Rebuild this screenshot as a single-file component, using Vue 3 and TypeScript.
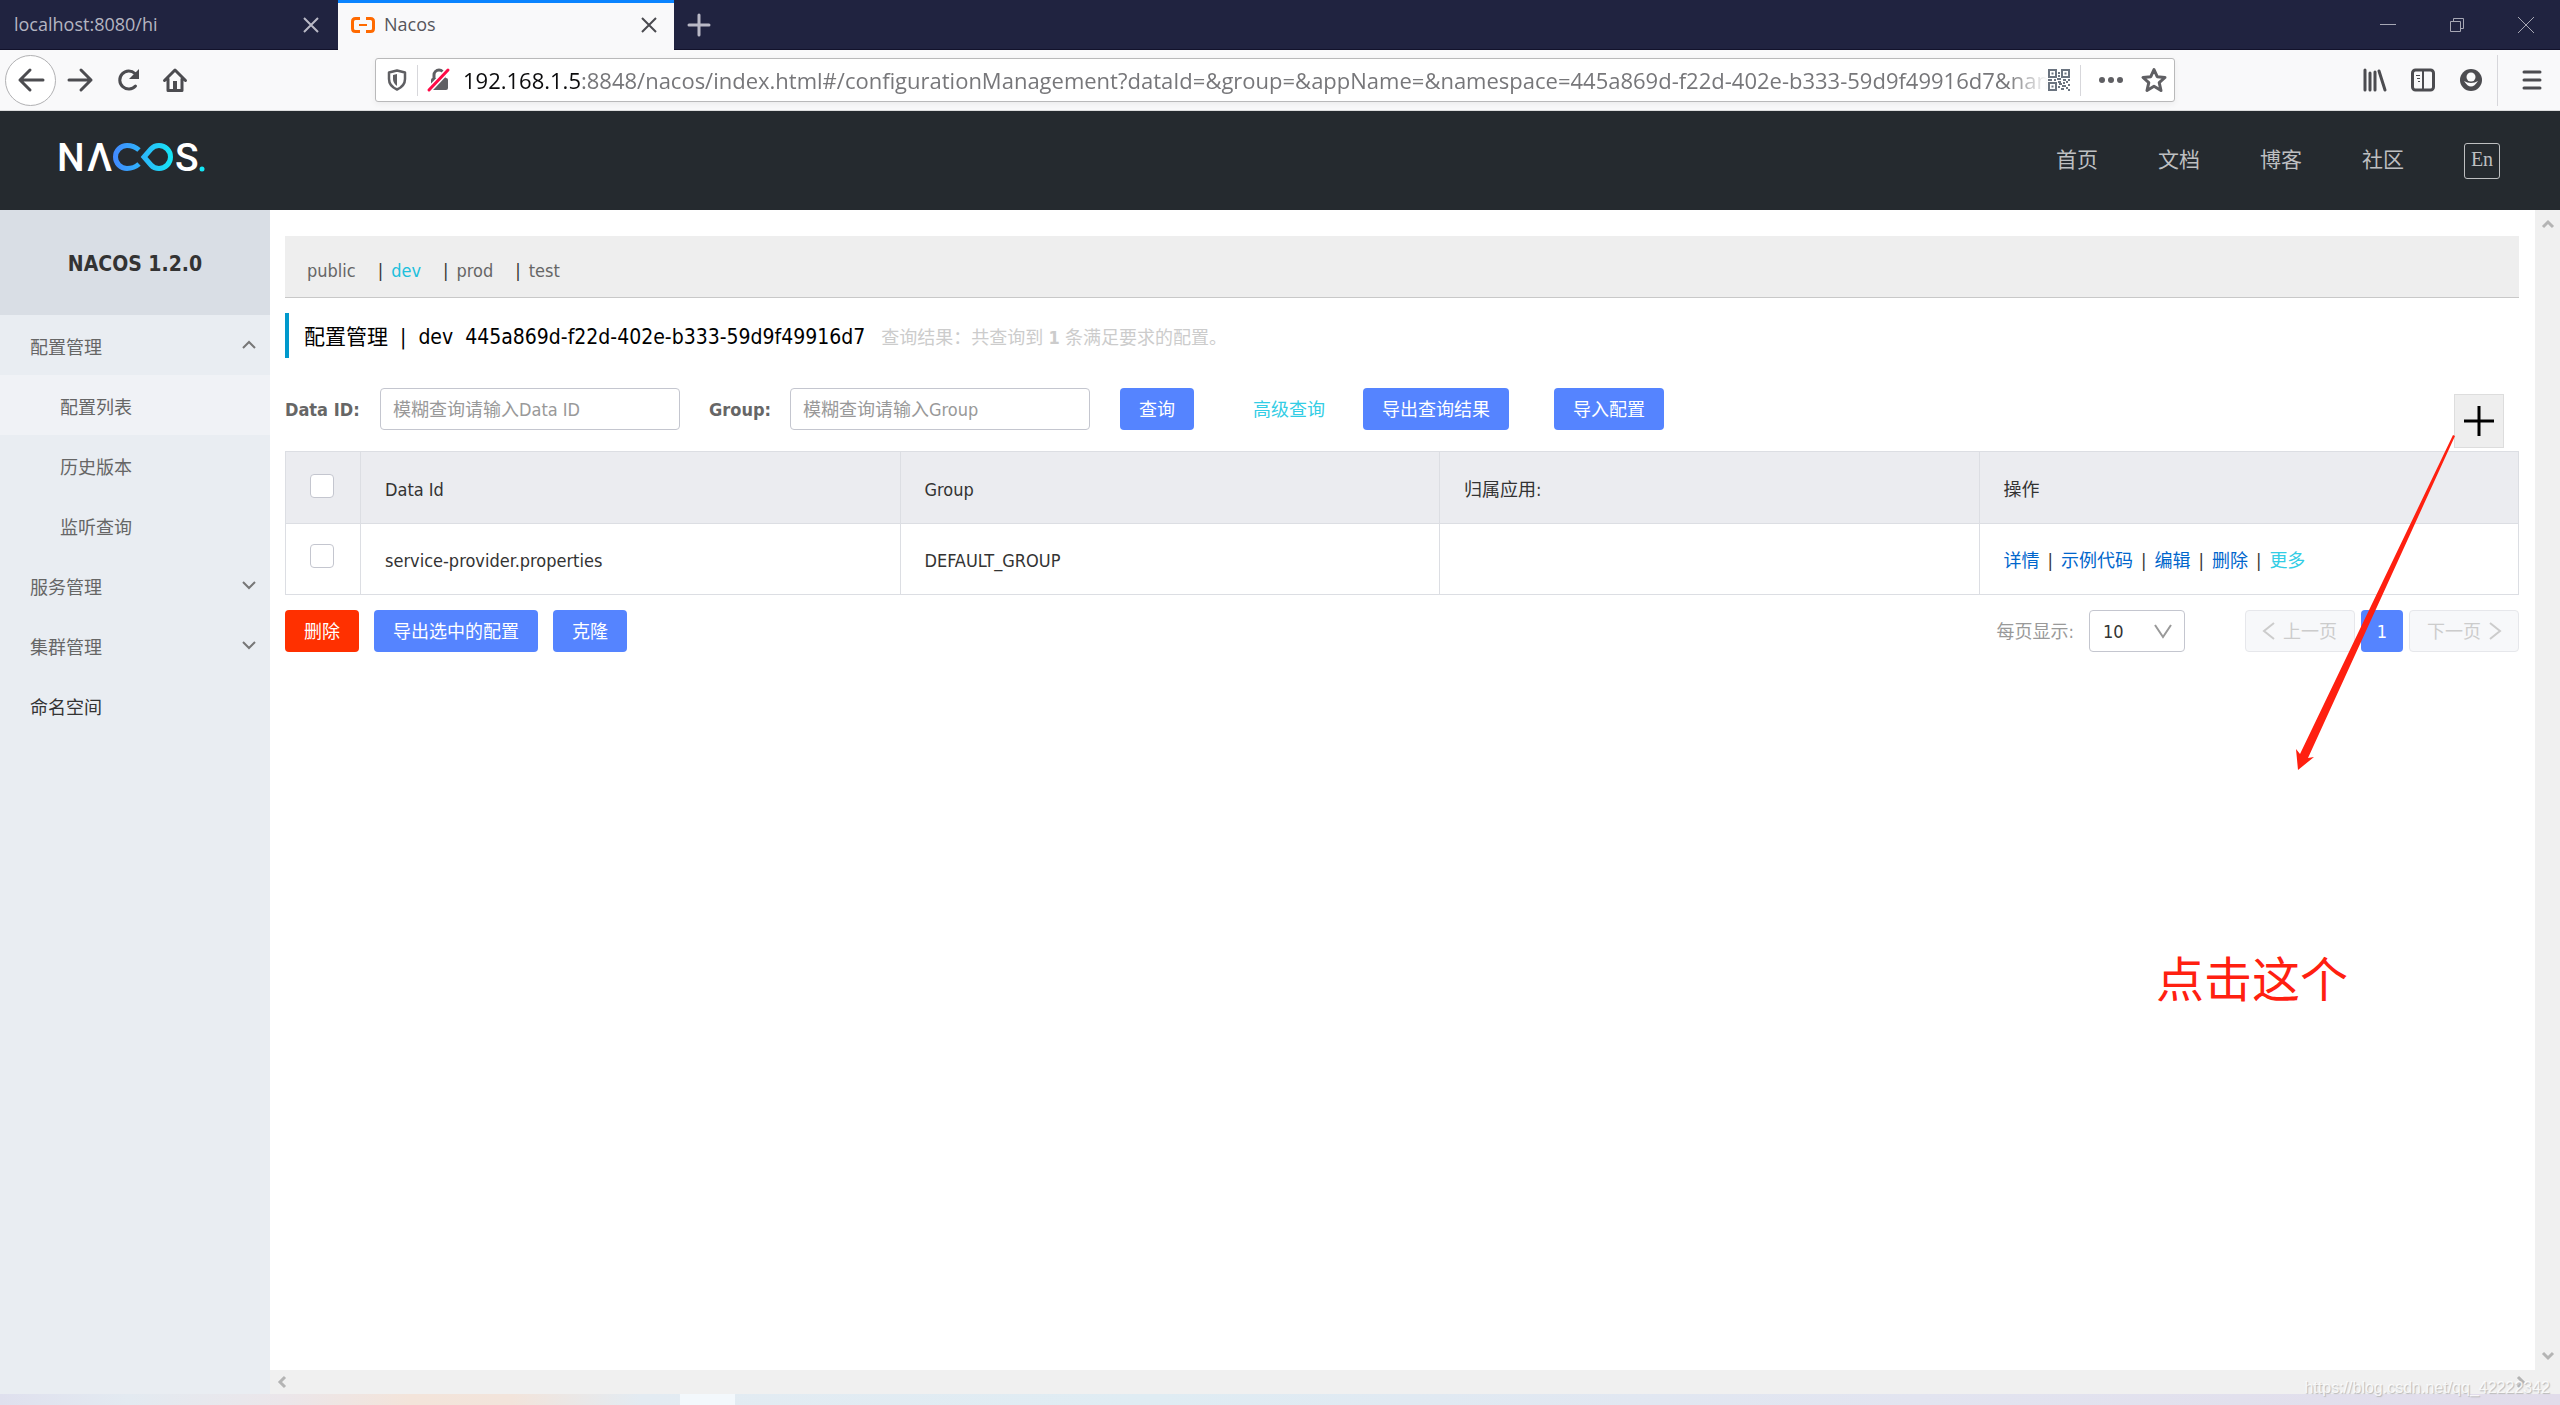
<script setup lang="ts">
import { ref } from 'vue'

interface NavLink { label: string }
interface ConfigRow { dataId: string; group: string; app: string }

const url = ':8848/nacos/index.html#/configurationManagement?dataId=&group=&appName=&namespace=445a869d-f22d-402e-b333-59d9f49916d7&name'
const navLinks: NavLink[] = [{ label: '首页' }, { label: '文档' }, { label: '博客' }, { label: '社区' }]
const namespaces: string[] = ['public', 'dev', 'prod', 'test']
const current = ref('dev')
const namespaceId = '445a869d-f22d-402e-b333-59d9f49916d7'
const dataId = ref('')
const group = ref('')
const pageSize = ref('10')
const rows: ConfigRow[] = [{ dataId: 'service-provider.properties', group: 'DEFAULT_GROUP', app: '' }]
const operations: string[] = ['详情', '示例代码', '编辑', '删除']
</script>

<template>
  <div class="window">
    <div class="tabs">
      <div class="tab">
        <span class="tab-title">localhost:8080/hi</span>
        <button class="icon-btn" aria-label="Close tab">
          <svg width="16" height="16" viewBox="0 0 16 16"><path d="M1 1L15 15M15 1L1 15" stroke="#b9b9c6" stroke-width="2" fill="none" /></svg>
        </button>
      </div>
      <div class="tab active">
        <svg class="favicon" width="24" height="16" viewBox="0 0 24 16"><path d="M9 1.500H4.500Q1.500 1.500 1.500 4.500V11.500Q1.500 14.500 4.500 14.500H9M15 1.500H19.500Q22.500 1.500 22.500 4.500V11.500Q22.500 14.500 19.500 14.500H15" stroke="#ff6a00" stroke-width="3" fill="none" /><path d="M8 8H16" stroke="#ff6a00" stroke-width="2" /></svg>
        <span class="tab-title">Nacos</span>
        <button class="icon-btn" aria-label="Close tab">
          <svg width="16" height="16" viewBox="0 0 16 16"><path d="M1 1L15 15M15 1L1 15" stroke="#4a4a4f" stroke-width="2" fill="none" /></svg>
        </button>
      </div>
      <button class="icon-btn new-tab" aria-label="New tab">
        <svg width="22" height="22" viewBox="0 0 22 22"><path d="M11 1V21M1 11H21" stroke="#b9b9c6" stroke-width="3" fill="none" stroke-linecap="round" /></svg>
      </button>
      <div class="window-controls">
        <button class="icon-btn" aria-label="Minimize"><svg width="16" height="16" viewBox="0 0 16 16"><path d="M0 7.500H16" stroke="#a6a7b4" fill="none" /></svg></button>
        <button class="icon-btn" aria-label="Restore"><svg width="16" height="16" viewBox="0 0 16 16"><path d="M1.500 4.500H11.500V14.500H1.500ZM4.500 4.500V1.500H14.500V11.500H11.500" stroke="#a6a7b4" fill="none" /></svg></button>
        <button class="icon-btn" aria-label="Close"><svg width="16" height="16" viewBox="0 0 16 16"><path d="M0 0L16 16M16 0L0 16" stroke="#a6a7b4" fill="none" /></svg></button>
      </div>
    </div>

    <div class="toolbar">
      <div class="nav-buttons">
        <button class="icon-btn back" aria-label="Back"><svg width="26" height="24" viewBox="0 0 26 24"><path d="M25 12H2M12 2L2 12L12 22" stroke="#4c4c50" stroke-width="3" fill="none" stroke-linecap="round" stroke-linejoin="round" /></svg></button>
        <button class="icon-btn" aria-label="Forward"><svg width="26" height="24" viewBox="0 0 26 24"><path d="M2 12H24M14 2L24 12L14 22" stroke="#4c4c50" stroke-width="3" fill="none" stroke-linecap="round" stroke-linejoin="round" /></svg></button>
        <button class="icon-btn" aria-label="Reload"><svg width="24" height="24" viewBox="0 0 24 24"><path d="M19.500 18A9 9 0 1 1 19 5.500L21 8" stroke="#4c4c50" stroke-width="3" fill="none" stroke-linecap="round" /><path d="M23 1V11H13Z" fill="#4c4c50" /></svg></button>
        <button class="icon-btn" aria-label="Home"><svg width="24" height="24" viewBox="0 0 24 24"><path d="M1.500 12.500L12 2L22.500 12.500M5 11V22.500H19V11" stroke="#4c4c50" stroke-width="3" fill="none" stroke-linecap="round" stroke-linejoin="round" /><path d="M10 13H14V22H10Z" fill="#4c4c50" /></svg></button>
      </div>
      <div class="url-box">
        <svg class="shield" width="20" height="22" viewBox="0 0 20 22"><path d="M10 1.500L18 3.500V10Q18 17 10 20.500Q2 17 2 10V3.500Z" fill="none" stroke="#5f5f63" stroke-width="2.500" stroke-linejoin="round" /><path d="M10 5L6 6V10Q6 14 10 17Z" fill="#5f5f63" /></svg>
        <span class="v-line"></span>
        <svg class="lock" width="22" height="24" viewBox="0 0 22 24"><path d="M6 11V7A5 5 0 0 1 16 7V11" fill="none" stroke="#5f5f63" stroke-width="3" /><rect x="3" y="10" width="17" height="12" rx="2" fill="#5f5f63" /><path d="M1 22L20 2" stroke="#fff" stroke-width="6" /><path d="M1 22L20 2" stroke="#ff0a46" stroke-width="3" stroke-linecap="round" /></svg>
        <div class="url-text"><span class="host">192.168.1.5</span>{{ url }}</div>
        <svg class="qr" width="22" height="22" viewBox="0 0 22 22" fill="none" stroke="#6b7480" stroke-width="2"><path d="M1 1H8V8H1ZM14 1H21V8H14ZM1 14H8V21H1Z" /><path d="M3.500 4.500H5.500M16.500 4.500H18.500M3.500 17.500H5.500M10 4H12M10 7H12M0 11H4M6 11H8M9 10H13M15 11H18M20 11H22M10 13H13M11 15H14M15 14H17M18 13H20M14 17H18M20 16H22M10 18H12M13 20H16M18 19H20M20 21H22" /></svg>
        <span class="v-line"></span>
        <svg class="dots" width="26" height="8" viewBox="0 0 26 8" fill="#5f5f63"><circle cx="4" cy="4" r="3" /><circle cx="13" cy="4" r="3" /><circle cx="22" cy="4" r="3" /></svg>
        <svg width="26" height="26" viewBox="0 0 26 26"><path d="M13 2.500L16.200 9.700L24 10.500L18.200 15.700L20 23.500L13 19.300L6 23.500L7.800 15.700L2 10.500L9.800 9.700Z" fill="none" stroke="#5f5f63" stroke-width="3" stroke-linejoin="round" /></svg>
      </div>
      <div class="tool-icons">
        <svg width="24" height="24" viewBox="0 0 24 24"><path d="M2 2V22M7 5V22M12 4V22M16 3L22 22" stroke="#4c4c50" stroke-width="3" fill="none" stroke-linecap="round" /></svg>
        <svg width="24" height="24" viewBox="0 0 24 24"><rect x="1.500" y="2" width="21" height="20" rx="3" fill="none" stroke="#4c4c50" stroke-width="3" /><path d="M12 3V21" stroke="#4c4c50" stroke-width="2" /><path d="M5 7.500H9M6 10.500H9M7 13.500H9" stroke="#4c4c50" /></svg>
        <svg width="24" height="24" viewBox="0 0 24 24"><circle cx="12" cy="12" r="11" fill="#4c4c50" /><circle cx="12" cy="9" r="4.500" fill="#f9f9fa" /><path d="M5 13Q12 24 19 13Q16 15 12 15Q8 15 5 13" fill="#f9f9fa" /></svg>
        <span class="v-line tall"></span>
        <svg width="20" height="20" viewBox="0 0 20 20"><path d="M2 2H18M2 10H18M2 18H18" stroke="#4c4c50" stroke-width="3" stroke-linecap="round" /></svg>
      </div>
    </div>

    <header class="site-header">
      <a href="#" class="logo" aria-label="NACOS">
        <svg width="146" height="32" viewBox="0 0 146 32">
          <defs><linearGradient id="loop" gradientUnits="userSpaceOnUse" x1="53" x2="113" y1="0" y2="0"><stop offset="0" stop-color="#4388ff" /><stop offset="1" stop-color="#15e6f5" /></linearGradient></defs>
          <text x="-3" y="30" class="logo-text">N</text>
          <text x="27" y="30" class="logo-text">Λ</text>
          <path d="M79 9Q74 4.500 67 4.500A11.500 11.500 0 0 0 67 27.500Q74 27.500 79 23M84 16L91 8Q94 4.500 99 4.500A11.500 11.500 0 0 1 99 27.500Q94 27.500 91 24Z" fill="none" stroke="url(#loop)" stroke-width="5" />
          <text x="115" y="30" class="logo-text">S</text>
          <circle cx="142" cy="28" r="2.500" fill="#15e6f5" />
        </svg>
      </a>
      <nav class="site-nav">
        <a v-for="link in navLinks" :key="link.label" href="#">{{ link.label }}</a>
        <button class="lang">En</button>
      </nav>
    </header>

    <div class="body">
      <aside class="sidebar">
        <h1>NACOS 1.2.0</h1>
        <a href="#" class="item">配置管理<svg width="14" height="8" viewBox="0 0 14 8"><path d="M1 7L7 1L13 7" /></svg></a>
        <a href="#" class="item sub selected">配置列表</a>
        <a href="#" class="item sub">历史版本</a>
        <a href="#" class="item sub">监听查询</a>
        <a href="#" class="item">服务管理<svg width="14" height="8" viewBox="0 0 14 8"><path d="M1 1L7 7L13 1" /></svg></a>
        <a href="#" class="item">集群管理<svg width="14" height="8" viewBox="0 0 14 8"><path d="M1 1L7 7L13 1" /></svg></a>
        <a href="#" class="item strong">命名空间</a>
      </aside>

      <div class="frame">
        <div class="frame-row">
          <main class="content">
            <div class="namespaces">
              <template v-for="(ns, i) in namespaces" :key="ns">
                <span v-if="i > 0" class="bar">|</span>
                <a href="#" :class="{ on: ns === current }">{{ ns }}</a>
              </template>
            </div>
            <div class="heading">
              <h2>配置管理</h2><span class="heading-bar">|</span><span>dev</span><span class="ns-id">{{ namespaceId }}</span>
              <span class="result">查询结果：共查询到 <b>1</b> 条满足要求的配置。</span>
            </div>
            <form class="search" @submit.prevent>
              <label class="data-label" for="data-id">Data ID:</label>
              <input id="data-id" v-model="dataId" type="text" placeholder="模糊查询请输入Data ID" />
              <label class="group-label" for="group">Group:</label>
              <input id="group" v-model="group" type="text" placeholder="模糊查询请输入Group" />
              <button class="btn query">查询</button>
              <a href="#" class="advanced">高级查询</a>
              <button class="btn export">导出查询结果</button>
              <button class="btn import">导入配置</button>
              <button class="add" aria-label="新建配置"><svg width="30" height="30" viewBox="0 0 30 30"><path d="M15 0V30M0 15H30" stroke="#000" stroke-width="3" /></svg></button>
            </form>
            <table class="configs">
              <colgroup><col class="check-col" /><col /><col /><col /><col /></colgroup>
              <thead>
                <tr><th><input type="checkbox" aria-label="全选" /></th><th>Data Id</th><th>Group</th><th>归属应用:</th><th>操作</th></tr>
              </thead>
              <tbody>
                <tr v-for="row in rows" :key="row.dataId">
                  <td><input type="checkbox" :aria-label="row.dataId" /></td>
                  <td>{{ row.dataId }}</td>
                  <td>{{ row.group }}</td>
                  <td>{{ row.app }}</td>
                  <td>
                    <div class="ops">
                      <template v-for="op in operations" :key="op"><a href="#">{{ op }}</a><span>|</span></template>
                      <a href="#" class="more">更多</a>
                    </div>
                  </td>
                </tr>
              </tbody>
            </table>
            <div class="footer">
              <button class="btn danger">删除</button>
              <button class="btn">导出选中的配置</button>
              <button class="btn">克隆</button>
              <label class="size-label" for="page-size">每页显示:</label>
              <span class="select-wrap">
                <select id="page-size" v-model="pageSize"><option>10</option><option>20</option><option>30</option></select>
                <svg width="18" height="14" viewBox="0 0 18 14"><path d="M1 1L9 13L17 1" fill="none" stroke="#999" stroke-width="2" /></svg>
              </span>
              <div class="pager">
                <button class="page-btn" disabled><svg width="12" height="18" viewBox="0 0 12 18"><path d="M11 1L1 9L11 17" /></svg>上一页</button>
                <button class="page-num">1</button>
                <button class="page-btn" disabled>下一页<svg width="12" height="18" viewBox="0 0 12 18"><path d="M1 1L11 9L1 17" /></svg></button>
              </div>
            </div>
            <svg class="arrow" width="160" height="336" viewBox="0 0 160 336"><path d="M157 0L159 1L12 323L18 322L2 335L0 314L4 319Z" fill="#ff2010" /></svg>
            <p class="note">点击这个</p>
          </main>
          <div class="scroll-y">
            <svg width="12" height="9" viewBox="0 0 12 9"><path d="M1 7L6 2L11 7" /></svg>
            <svg width="12" height="9" viewBox="0 0 12 9"><path d="M1 2L6 7L11 2" /></svg>
          </div>
        </div>
        <div class="scroll-x">
          <svg width="9" height="12" viewBox="0 0 9 12"><path d="M7 1L2 6L7 11" /></svg>
          <svg width="9" height="12" viewBox="0 0 9 12"><path d="M2 1L7 6L2 11" /></svg>
        </div>
      </div>
    </div>
    <div class="taskbar"><span class="task"></span></div>
    <div class="watermark">https://blog.csdn.net/qq_42222342</div>
  </div>
</template>

<style>
body { margin: 0; }
</style>

<style scoped>
.window {
  position: relative;
  display: flex;
  flex-direction: column;
  min-height: 100vh;
  background: #fff;
  color: #333;
  font: 18px/27px "DejaVu Sans Condensed", "Noto Sans", "Noto Sans CJK SC", sans-serif;
}
.window *, .window { box-sizing: border-box; }
a { color: inherit; text-decoration: none; }
button, input, select { margin: 0; padding: 0; border: 0; font: inherit; color: inherit; }
svg { display: block; flex: none; overflow: visible; }
.icon-btn { display: flex; align-items: center; justify-content: center; background: none; }

.tabs { display: flex; height: 50px; background: #202340; border-bottom: 1px solid #12122b; font-family: "Open Sans", sans-serif; }
.tab { display: flex; align-items: center; width: 338px; height: 50px; padding: 0 19px 0 14px; color: #b4b5c1; }
.tab.active { width: 336px; padding: 0 17px 0 13px; background: #f9f9fa; box-shadow: inset 0 3px #0a84ff; color: #55555a; }
.favicon { margin-right: 9px; }
.tab-title { flex: 1; padding-bottom: 2px; }
.new-tab { margin-left: 14px; }
.window-controls { display: flex; gap: 53px; margin-left: auto; padding-right: 26px; }

.toolbar { display: flex; align-items: center; height: 61px; padding-right: 18px; background: #f9f9fa; border-bottom: 1px solid #dcdcdd; }
.nav-buttons { display: flex; align-items: center; gap: 23px; width: 375px; padding-left: 5px; }
.back { width: 51px; height: 51px; margin-right: -12px; border: 1px solid #b1b1b3; border-radius: 50%; background: #fff; }
.url-box { display: flex; align-items: center; flex: 1; min-width: 0; height: 44px; padding: 0 7px 0 11px; background: #fff; border: 1px solid #b9b9ba; border-radius: 3px; box-shadow: 0 2px 6px rgba(0, 0, 0, 0.06); }
.v-line { width: 1px; height: 31px; background: #d7d7db; }
.shield { margin-right: 10px; }
.lock { margin: 0 13px 0 10px; }
.url-text { flex: 1; min-width: 0; overflow: hidden; white-space: nowrap; color: #77777a; font: 22px/32px "Open Sans", sans-serif; mask-image: linear-gradient(to left, transparent, #000 40px); }
.host { color: #0c0c0d; }
.qr { margin-right: 10px; }
.dots { margin: 0 17px; }
.tool-icons { display: flex; align-items: center; gap: 24px; width: 367px; justify-content: flex-end; }
.tall { height: 51px; margin-left: -10px; }

.site-header { display: flex; align-items: center; justify-content: space-between; height: 99px; padding: 0 60px; background: #252a2f; }
.logo { margin-bottom: 7px; }
.logo-text { font: 500 39px Roboto, sans-serif; fill: #fff; }
.site-nav { display: flex; align-items: center; gap: 60px; color: #bebfc1; font-size: 21px; }
.lang { width: 36px; height: 36px; padding-bottom: 3px; background: none; border: 1px solid #bebfc1; border-radius: 3px; font: 20px/30px "Liberation Serif", serif; }

.body { display: flex; flex: 1; }
.sidebar { width: 270px; background: #e9edf2; color: #666; }
.sidebar h1 { margin: 0; height: 105px; padding-top: 2px; background: #d9dee5; color: #333; font-size: 21px; line-height: 105px; text-align: center; }
.item { display: flex; align-items: center; justify-content: space-between; height: 60px; padding: 4px 14px 0 30px; }
.item svg { margin-bottom: 4px; fill: none; stroke: #777; stroke-width: 2; }
.sub { padding-left: 60px; }
.selected { background: #f0f2f6; }
.strong { color: #333; }

.frame { display: flex; flex: 1; flex-direction: column; min-width: 0; }
.frame-row { display: flex; flex: 1; }
.content { position: relative; flex: 1; min-width: 0; padding: 26px 16px 0 15px; }
.namespaces { display: flex; height: 62px; padding-left: 22px; align-items: center; background: #eee; border-bottom: 1px solid #c8c8c8; color: #666; padding-top: 8px; }
.namespaces a { margin-right: 22px; }
.bar { margin-right: 8px; color: #333; }
.namespaces .on { color: #20bfdc; }
.heading { display: flex; align-items: center; height: 45px; margin: 15px 0 30px; padding: 3px 0 0 15px; border-left: 4px solid #09c; color: #000; font-size: 21px; white-space: nowrap; }
.heading h2 { margin: 0; font-size: 21px; font-weight: 400; }
.heading-bar { margin: 0 12px; }
.ns-id { margin-left: 12px; }
.result { margin-left: 16px; color: #ccc; font-size: 18px; }
.search { display: flex; align-items: center; height: 42px; margin-bottom: 21px; white-space: nowrap; }
.search label { color: #666; font-weight: 700; }
.data-label { width: 95px; }
.group-label { width: 81px; margin-left: 29px; }
.search input { width: 300px; height: 42px; padding: 0 12px; border: 1px solid #c4c6cf; border-radius: 4px; background: #fff; }
.search input::placeholder { color: #999; opacity: 1; }
.btn { height: 42px; padding: 0 19px; background: #5584ff; color: #fff; border-radius: 4px; white-space: nowrap; }
.query { margin-left: 30px; }
.advanced { margin: 0 38px 0 59px; color: #33cde5; }
.import { margin-left: 45px; }
.add { display: flex; align-items: center; justify-content: center; width: 50px; height: 54px; margin: 24px 15px 0 auto; background: #eee; border: 1px solid #ddd; }

.configs { width: 100%; table-layout: fixed; border-collapse: collapse; }
.check-col { width: 75px; }
.configs th, .configs td { height: 72px; padding: 4px 24px 0; border: 1px solid #dcdee3; font-weight: 400; text-align: left; }
.configs th { background: #ebecf0; }
.configs td { height: 71px; padding-top: 2px; }
.configs input { display: block; appearance: none; width: 24px; height: 24px; margin-top: -8px; border: 1px solid #c4c6cf; border-radius: 4px; background: #fff; }
.ops { display: flex; gap: 8px; color: #333; white-space: nowrap; }
.ops a { color: #06c; }
.ops .more { color: #33cde5; }

.footer { display: flex; align-items: center; gap: 15px; margin-top: 15px; }
.danger { background: #ff3000; }
.size-label { margin-left: auto; color: #999; }
.select-wrap { position: relative; width: 96px; height: 42px; margin-right: 45px; }
.select-wrap select { width: 100%; height: 100%; padding-left: 13px; appearance: none; background: #fff; border: 1px solid #c4c6cf; border-radius: 4px; }
.select-wrap svg { position: absolute; right: 13px; top: 14px; pointer-events: none; }
.pager { display: flex; gap: 6px; }
.page-btn { display: flex; align-items: center; justify-content: center; gap: 8px; width: 110px; height: 42px; background: #f7f8fa; border: 1px solid #e6e7eb; border-radius: 4px; color: #ccc; white-space: nowrap; }
.page-btn svg { fill: none; stroke: #ccc; stroke-width: 2; }
.page-num { width: 42px; height: 42px; background: #5584ff; color: #fff; border-radius: 4px; }

.arrow { position: absolute; top: 225px; right: 79px; pointer-events: none; }
.note { position: absolute; top: 734px; right: 187px; margin: 0; color: #ff2010; font-size: 48px; line-height: 72px; }

.scroll-y { display: flex; flex-direction: column; justify-content: space-between; align-items: center; width: 25px; padding: 10px 0; background: #f0f0f0; }
.scroll-x { display: flex; justify-content: space-between; align-items: center; height: 24px; padding: 0 35px 0 8px; background: #f0f0f0; }
.scroll-y svg, .scroll-x svg { fill: none; stroke: #b4b4b4; stroke-width: 3; }
.taskbar { height: 11px; background: linear-gradient(to right, #dfe0ee, #e3eaf1 5%, #ebe6ea 11%, #f3e4da 16%, #f2e4db 20%, #e3ebf2 25%, #dfecf3 45%, #e2e4f0 75%, #e1dcea); }
.task { display: block; width: 55px; height: 11px; margin-left: 680px; background: #f3f8fc; }
.watermark { position: absolute; right: 10px; bottom: 6px; color: rgba(255, 255, 255, 0.8); font: 16px/22px "Liberation Sans", sans-serif; text-shadow: 1px 1px 1px #b8b8b8; }
</style>
